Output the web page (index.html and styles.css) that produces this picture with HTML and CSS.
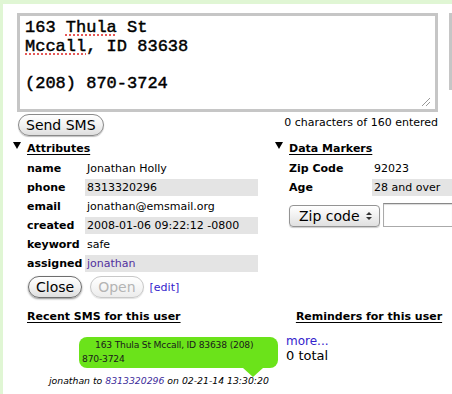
FILE: index.html
```html
<!DOCTYPE html>
<html lang="en">
<head>
    <meta charset="UTF-8">
    <title>User detail</title>
    <link rel="stylesheet" href="styles.css">
</head>
<body>
    <div class="page">
        <div class="compose">
            <div class="msg-box">
                <div class="msg-txt">163 <span class="typo">Thula</span> St<br><span class="typo">Mccall</span>, ID 83638<br><br>(208) 870-3724</div>
                <svg class="grip" width="10" height="10" viewBox="0 0 10 10">
                    <line x1="1" y1="9" x2="9" y2="1" stroke="#999" stroke-width="1"/>
                    <line x1="5" y1="9" x2="9" y2="5" stroke="#999" stroke-width="1"/>
                </svg>
            </div>
            <div class="side-box"></div>
        </div>
        <div class="send-row">
            <button class="pill-btn send-btn">Send SMS</button>
            <span class="char-count">0 characters of 160 entered</span>
        </div>

        <div class="cols">
            <div class="col-left">
                <h3 class="sec-head"><span class="tri"></span><span class="sec-title">Attributes</span></h3>
                <table class="attr-tbl">
                    <tr><th>name</th><td>Jonathan Holly</td></tr>
                    <tr class="alt"><th>phone</th><td>8313320296</td></tr>
                    <tr><th>email</th><td>jonathan@emsmail.org</td></tr>
                    <tr class="alt"><th>created</th><td>2008-01-06 09:22:12 -0800</td></tr>
                    <tr><th>keyword</th><td>safe</td></tr>
                    <tr class="alt"><th>assigned</th><td><a class="user-lnk" href="#">jonathan</a></td></tr>
                </table>
                <div class="attr-btns">
                    <button class="pill-btn close-btn">Close</button>
                    <button class="pill-btn open-btn" disabled>Open</button>
                    <a class="edit-lnk" href="#">[edit]</a>
                </div>
            </div>
            <div class="col-right">
                <h3 class="sec-head"><span class="tri"></span><span class="sec-title">Data Markers</span></h3>
                <table class="marker-tbl">
                    <tr><th>Zip Code</th><td>92023</td></tr>
                    <tr class="alt"><th>Age</th><td>28 and over</td></tr>
                </table>
                <div class="marker-add">
                    <div class="popup">Zip code<span class="popup-arr"><i class="up"></i><i class="dn"></i></span></div>
                    <div class="marker-inp"></div>
                </div>
            </div>
        </div>

        <div class="lists">
            <div class="list-left">
                <h3 class="list-head">Recent SMS for this user</h3>
                <div class="bubble">163 Thula St Mccall, ID 83638 (208) 870-3724</div>
                <p class="sms-meta">jonathan to <a class="num-lnk" href="#">8313320296</a> on 02-21-14 13:30:20</p>
            </div>
            <div class="list-right">
                <h3 class="list-head">Reminders for this user</h3>
                <a class="more-lnk" href="#">more...</a>
                <p class="total-txt">0 total</p>
            </div>
        </div>
    </div>
</body>
</html>
```

FILE: styles.css
```css
* {
    margin: 0;
    padding: 0;
    box-sizing: border-box;
}
html, body {
    overflow: hidden;
}
body {
    background: #fff;
    color: #000;
    font-family: "DejaVu Sans", sans-serif;
    font-size: 11px;
}
.page {
    height: 394px;
    border-top: 4px solid #e0f6d4;
    border-left: 3px solid #e0f6d4;
}
.compose {
    display: flex;
    margin: 9px 0 0 14px;
    overflow: hidden;
}
.msg-box {
    position: relative;
    flex: none;
    width: 421px;
    height: 99px;
    border: 3px solid #c6c6c6;
    padding: 3px 5px;
}
.msg-txt {
    font-family: "Liberation Mono", monospace;
    font-size: 17px;
    line-height: 18.5px;
    -webkit-text-stroke: 0.45px #000;
}
.typo {
    text-decoration: underline dotted #d22;
    text-underline-offset: 3px;
}
.grip {
    position: absolute;
    right: 4px;
    bottom: 2px;
}
.side-box {
    flex: none;
    width: 3px;
    height: 78px;
    margin: -1px 0 0 11px;
    background: #c6c6c6;
}
.send-row {
    display: flex;
    justify-content: space-between;
    align-items: center;
    width: 421px;
    margin: 2px 0 0 14px;
}
.pill-btn {
    height: 22px;
    padding: 0 7px;
    font-family: "DejaVu Sans", sans-serif;
    font-size: 14px;
    color: #000;
    border: 1px solid #8a8a8a;
    border-radius: 11px;
    background: linear-gradient(#fff, #f2f2f2 50%, #dedede);
    box-shadow: 0 1px 1px rgba(0, 0, 0, 0.25);
}
.send-btn {
    margin-left: 1px;
}
.char-count {
    margin-top: -5px;
}

/* attributes + markers */
.cols {
    display: flex;
    margin-top: 6px;
}
.col-left {
    flex: none;
    width: 262px;
    margin-left: 10px;
}
.col-right {
    flex: none;
    width: 177px;
    overflow: hidden;
}
.sec-head {
    display: flex;
    align-items: flex-start;
    height: 14px;
    font-size: 11px;
    line-height: 14px;
}
.tri {
    width: 0;
    height: 0;
    border-left: 4px solid transparent;
    border-right: 4px solid transparent;
    border-top: 7px solid #000;
}
.sec-title {
    margin-left: 6px;
    text-decoration: underline;
    text-underline-offset: 2px;
}
.attr-tbl, .marker-tbl {
    margin: 2px 0 0 14px;
    border-collapse: separate;
    border-spacing: 0 2px;
}
.attr-tbl th, .marker-tbl th {
    padding: 0;
    height: 17px;
    text-align: left;
    font-weight: bold;
}
.attr-tbl td, .marker-tbl td {
    padding: 0 0 0 2px;
    height: 17px;
}
.attr-tbl th {
    width: 58px;
}
.attr-tbl td {
    width: 173px;
}
.marker-tbl th {
    width: 83px;
}
.marker-tbl td {
    width: 80px;
    white-space: nowrap;
}
.alt td {
    background: #e4e4e4;
}
.user-lnk {
    color: #52309e;
    text-decoration: none;
}
.attr-btns {
    display: flex;
    align-items: center;
    margin: 2px 0 0 15px;
}
.close-btn {
    border-color: #6e6e6e;
    box-shadow: 0 1px 2px rgba(0, 0, 0, 0.45);
}
.open-btn {
    margin-left: 8px;
    color: #b4b4b4;
    border-color: #c8c8c8;
    background: linear-gradient(#fff, #f6f6f6 50%, #ececec);
    box-shadow: 0 1px 1px rgba(0, 0, 0, 0.12);
}
.edit-lnk {
    margin-left: 6px;
    color: #3322cc;
    text-decoration: none;
}
.marker-add {
    display: flex;
    margin: 7px 0 0 14px;
}
.popup {
    display: flex;
    flex: none;
    align-items: center;
    width: 91px;
    height: 22px;
    padding-left: 9px;
    font-size: 14px;
    border: 1px solid #949494;
    border-radius: 4px;
    background: linear-gradient(#fff, #f0f0f0 50%, #e0e0e0);
    box-shadow: 0 1px 1px rgba(0, 0, 0, 0.2);
}
.popup-arr {
    display: flex;
    flex-direction: column;
    gap: 2px;
    margin-left: 6px;
}
.popup-arr i {
    width: 0;
    height: 0;
    border-left: 3px solid transparent;
    border-right: 3px solid transparent;
}
.popup-arr .up {
    border-bottom: 3px solid #333;
}
.popup-arr .dn {
    border-top: 3px solid #333;
}
.marker-inp {
    flex: none;
    width: 69px;
    height: 24px;
    margin: -2px 0 0 3px;
    border: 1px solid #aaa;
    border-right: 0;
    border-top-color: #888;
    box-shadow: inset 0 1px 1px rgba(0, 0, 0, 0.15);
}

/* sms + reminders */
.lists {
    display: flex;
    margin-top: 12px;
}
.list-left {
    flex: none;
    width: 259px;
    margin-left: 24px;
}
.list-right {
    flex: 1;
}
.list-head {
    height: 14px;
    font-size: 11px;
    line-height: 14px;
    text-decoration: underline;
    text-underline-offset: 2px;
}
.list-right .list-head {
    text-align: center;
}
.bubble {
    position: relative;
    width: 199px;
    height: 31px;
    margin: 13px 0 0 52px;
    padding: 1px 3px 0;
    text-indent: 13px;
    font-size: 9.2px;
    letter-spacing: -0.2px;
    line-height: 13.5px;
    color: #1a1a1a;
    background: #6be31a;
    border-radius: 8px;
}
.bubble:after {
    content: "";
    position: absolute;
    left: 164px;
    top: 100%;
    border-left: 10px solid transparent;
    border-right: 10px solid transparent;
    border-top: 9px solid #6be31a;
}
.sms-meta {
    margin: 7px 0 0 22px;
    font-size: 9.3px;
    font-style: italic;
}
.num-lnk {
    color: #3b2a9a;
    text-decoration: none;
}
.more-lnk {
    display: block;
    margin-top: 10px;
    font-size: 12px;
    line-height: 14.5px;
    color: #3322cc;
    text-decoration: none;
}
.total-txt {
    font-size: 13px;
    line-height: 14.5px;
}
```
